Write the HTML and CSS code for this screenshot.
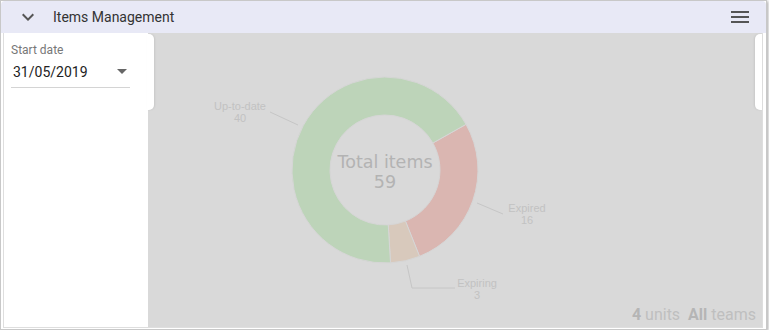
FILE: index.html
```html
<!DOCTYPE html>
<html lang="en">
<head>
  <meta charset="UTF-8" />
  <title>Items Management</title>
  <link rel="stylesheet" href="styles.css">
</head>
<body>
  <div class="frame">
    <header class="bar">
      <svg class="chevron" viewBox="0 0 24 24" width="24" height="24"><path d="M16.59 8.59L12 13.17 7.41 8.59 6 10l6 6 6-6z"/></svg>
      <span class="title">Items Management</span>
      <svg class="menu" viewBox="0 0 24 24" width="24" height="24"><path d="M3 18h18v-2H3v2zm0-5h18v-2H3v2zm0-7v2h18V6H3z"/></svg>
    </header>

    <div class="content">
      <aside class="filters">
        <div class="field">
          <label>Start date</label>
          <div class="select">
            <span>31/05/2019</span>
            <i class="caret"></i>
          </div>
        </div>
      </aside>

      <main class="chart">
        <svg class="donut" width="614" height="270" viewBox="0 0 614 270">
          <g stroke="#d6d6d6" stroke-width="1">
            <path fill="#dab6b1" d="M318 91.35 A93 93 0 0 1 271.54 223.35 L257.43 188.07 A55 55 0 0 0 284.9 110 Z"/>
            <path fill="#d8c9bc" d="M271.54 223.35 A93 93 0 0 1 242.51 229.83 L240.26 191.9 A55 55 0 0 0 257.43 188.07 Z"/>
            <path fill="#bdd4b9" d="M242.51 229.83 A93 93 0 1 1 318 91.35 L284.9 110 A55 55 0 1 0 240.26 191.9 Z"/>
          </g>
          <g fill="none" stroke="#c6c6c6" stroke-width="1">
            <path d="M122 79 L150 92"/>
            <path d="M329 170 L355 181"/>
            <path d="M259 232 L264 255 L307 255"/>
          </g>
          <g class="lbl" text-anchor="middle">
            <text x="92" y="77">Up-to-date</text>
            <text x="92" y="89">40</text>
            <text x="379" y="179">Expired</text>
            <text x="379" y="191">16</text>
            <text x="329" y="254">Expiring</text>
            <text x="329" y="266">3</text>
          </g>
          <g class="total" text-anchor="middle">
            <text x="237" y="135">Total items</text>
            <text x="237" y="155">59</text>
          </g>
        </svg>
        <div class="stats">
          <b>4</b> units <b class="gap">All</b> teams
        </div>
      </main>

      <span class="handle left"></span>
      <span class="handle right"></span>
    </div>
  </div>
</body>
</html>
```

FILE: styles.css
```css
* {
  box-sizing: border-box;
  margin: 0;
  padding: 0;
}
body {
  font-family: Roboto, "Liberation Sans", sans-serif;
  background: #fff;
  color: #222;
}
.frame {
  width: 767px;
  height: 330px;
  border: 1px solid #c8c8c8;
  background: #fff;
  box-shadow: 1px 1px 3px rgba(0,0,0,0.35);
  display: flex;
  flex-direction: column;
}
.bar {
  height: 32px;
  flex-shrink: 0;
  background: #e8e9f6;
  border-radius: 4px 4px 0 0;
  display: flex;
  align-items: center;
  padding: 0 14px 0 15px;
}
.chevron {
  fill: #555;
}
.title {
  margin-left: 13px;
  font-size: 14px;
  color: #333;
  flex: 1;
}
.menu {
  fill: #555;
}
.content {
  position: relative;
  height: 295px;
  margin: 0 3px 1px 2px;
  border: 1px solid #dedede;
  border-top: none;
  display: flex;
}
.filters {
  width: 144px;
  background: #fff;
  padding: 10px 18px 0 7px;
}
.field label {
  display: block;
  font-size: 12px;
  line-height: 14px;
  color: #777;
}
.select {
  margin-top: 5px;
  height: 26px;
  padding: 0 3px 6px 2px;
  border-bottom: 1px solid #d4d4d4;
  display: flex;
  align-items: center;
  justify-content: space-between;
  font-size: 14px;
  line-height: 20px;
  color: #222;
}
.caret {
  width: 0;
  height: 0;
  border-left: 5px solid transparent;
  border-right: 5px solid transparent;
  border-top: 5px solid #666;
}
.chart {
  flex: 1;
  background: #d9d9d9;
  display: flex;
  flex-direction: column;
}
.donut {
  display: block;
}
.lbl {
  font-family: "Liberation Sans", Arial, sans-serif;
  font-size: 11px;
  fill: #c2c2c2;
}
.total {
  font-family: "DejaVu Sans", Verdana, sans-serif;
  font-size: 17.5px;
  fill: #b3b3b3;
}
.stats {
  margin-top: auto;
  align-self: flex-end;
  padding: 0 6px 2px 0;
  font-size: 16px;
  line-height: 20px;
  color: #bfbfbf;
}
.stats b {
  color: #b5b5b5;
}
.stats .gap {
  margin-left: 4px;
}
.handle {
  position: absolute;
  top: 1px;
  width: 7px;
  height: 76px;
  background: #fff;
}
.handle.left {
  left: 143px;
  border-radius: 0 5px 5px 0;
  box-shadow: 1px 0 2px rgba(0,0,0,0.08);
}
.handle.right {
  right: 0;
  border-radius: 5px 0 0 5px;
  box-shadow: -1px 0 2px rgba(0,0,0,0.08);
}
```
